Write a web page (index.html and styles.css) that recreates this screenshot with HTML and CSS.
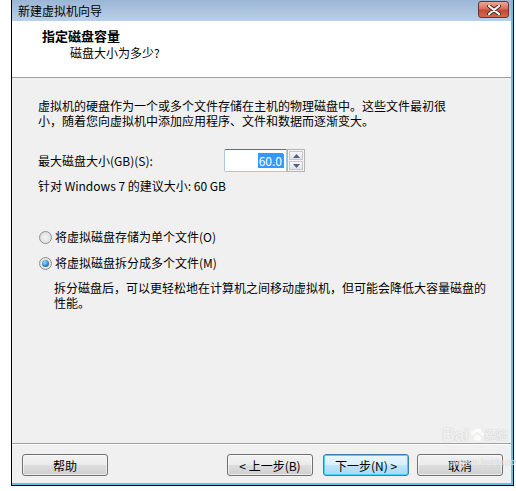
FILE: index.html
```html
<!DOCTYPE html>
<html lang="zh">
<head>
<meta charset="utf-8">
<link rel="stylesheet" href="styles.css">
</head>
<body>
<div class="window">
  <div class="frame">
    <div class="titlebar">
      <span class="title">新建虚拟机向导</span>
      <div class="close">
        <svg width="16" height="10" viewBox="0 0 16 10">
          <path d="M3 1 L13 9 M13 1 L3 9" stroke="#4a2620" stroke-width="4" stroke-linecap="round"/>
          <path d="M3 1 L13 9 M13 1 L3 9" stroke="#ffffff" stroke-width="2.2" stroke-linecap="round"/>
        </svg>
      </div>
    </div>
    <div class="header">
      <div class="h-title">指定磁盘容量</div>
      <div class="h-sub">磁盘大小为多少?</div>
    </div>
    <div class="content">
      <p class="desc">虚拟机的硬盘作为一个或多个文件存储在主机的物理磁盘中。这些文件最初很<br>小，随着您向虚拟机中添加应用程序、文件和数据而逐渐变大。</p>
      <div class="size-row">
        <span class="label">最大磁盘大小(GB)(S):</span>
        <div class="spin">
          <div class="field"><span class="sel">60.0</span><span class="caret"></span></div>
          <div class="arrows">
            <div class="arr"><svg width="7" height="4" viewBox="0 0 7 4"><path d="M0 4 L3.5 0 L7 4Z" fill="#4d6185"/></svg></div>
            <div class="arr"><svg width="7" height="4" viewBox="0 0 7 4"><path d="M0 0 L3.5 4 L7 0Z" fill="#4d6185"/></svg></div>
          </div>
        </div>
      </div>
      <div class="recommend">针对 Windows 7 的建议大小: 60 GB</div>
      <div class="radio r1"><span class="dot"></span><span>将虚拟磁盘存储为单个文件(O)</span></div>
      <div class="radio r2"><span class="dot on"></span><span>将虚拟磁盘拆分成多个文件(M)</span></div>
      <p class="desc2">拆分磁盘后，可以更轻松地在计算机之间移动虚拟机，但可能会降低大容量磁盘的<br>性能。</p>
    </div>
    <div class="footer">
      <button class="btn">帮助</button>
      <div class="spacer"></div>
      <button class="btn">&lt; 上一步(B)</button>
      <button class="btn default">下一步(N) &gt;</button>
      <button class="btn">取消</button>
    </div>
  </div>
  <div class="watermark">
    <div class="wm-top">Bai<svg class="paw" width="14" height="14" viewBox="0 0 14 14"><circle cx="3" cy="5" r="2" fill="rgba(255,255,255,0.8)"/><circle cx="6" cy="2.5" r="2" fill="rgba(255,255,255,0.8)"/><circle cx="9.5" cy="3" r="2" fill="rgba(255,255,255,0.8)"/><circle cx="12" cy="6" r="1.8" fill="rgba(255,255,255,0.8)"/><ellipse cx="7.5" cy="10" rx="3.5" ry="3" fill="rgba(255,255,255,0.8)"/></svg><span class="wm-cn">经验</span></div>
    <div class="wm-bot">jingyan.baidu.com</div>
  </div>
</div>
</body>
</html>
```
FILE: styles.css
```css
html, body {
  margin: 0;
  padding: 0;
  background: #ffffff;
}
body {
  font-family: "Noto Sans CJK SC", "Noto Sans", sans-serif;
  font-size: 12px;
  color: #000;
}
.window {
  position: relative;
  margin-left: 11px;
  width: 501px;
  height: 485px;
  border-left: 1px solid #000;
  border-right: 1px solid #000;
  border-bottom: 1px solid #000;
}
.frame {
  height: 483px;
  border-right: 2px solid #5cc2ee;
  border-bottom: 2px solid #5cc2ee;
  display: flex;
  flex-direction: column;
  background: #f0f0f0;
}
.titlebar {
  height: 21px;
  flex: none;
  background: linear-gradient(#9bb5d5, #b9d0e9);
  display: flex;
  align-items: center;
  padding-left: 6px;
  padding-right: 2px;
}
.title {
  flex: 1;
  line-height: 21px;
}
.close {
  width: 29px;
  height: 15px;
  border: 1px solid #6d3329;
  border-radius: 3px;
  background: linear-gradient(#e9a897 0%, #d7705c 45%, #c54a33 55%, #cf6a4f 100%);
  display: flex;
  align-items: center;
  justify-content: center;
  margin-top: -2px;
}
.header {
  flex: none;
  background: #ffffff;
  border-bottom: 1px solid #a0a0a0;
  box-sizing: border-box;
  height: 57px;
}
.h-title {
  font-weight: bold;
  font-size: 13px;
  line-height: 16px;
  padding-left: 30px;
  margin-top: 7px;
}
.h-sub {
  line-height: 16px;
  padding-left: 58px;
  margin-top: 1px;
}
.content {
  flex: 1;
  padding: 20px 20px 0 26px;
  border-bottom: 1px solid #a0a0a0;
}
.desc {
  margin: 0;
  line-height: 15px;
}
.size-row {
  margin-top: 21px;
  display: flex;
  align-items: center;
  height: 23px;
}
.label {
  width: 186px;
}
.spin {
  display: flex;
  height: 23px;
}
.field {
  width: 59px;
  height: 21px;
  background: #fff;
  border: 1px solid #a7c9e3;
  border-top-color: #3d7bad;
  border-radius: 2px 0 0 2px;
  display: flex;
  align-items: center;
  justify-content: flex-end;
  padding-right: 2px;
}
.sel {
  background: #3399ff;
  color: #fff;
  line-height: 15px;
  padding: 0 1px;
}
.caret {
  width: 1px;
  height: 14px;
  background: #e07020;
}
.arrows {
  width: 18px;
  display: flex;
  flex-direction: column;
  gap: 1px;
  border: 1px solid #b4b4b4;
  box-sizing: border-box;
  height: 23px;
  padding: 1px;
  background: #f4f4f4;
}
.arr {
  flex: 1;
  border: 1px solid #c7c7c7;
  background: linear-gradient(#f6f6f6, #e2e2e2);
  display: flex;
  align-items: center;
  justify-content: center;
}
.recommend {
  margin-top: 7px;
  line-height: 14px;
}
.radio {
  display: flex;
  align-items: center;
  gap: 3px;
  line-height: 14px;
  margin-left: 1px;
}
.r1 { margin-top: 37px; }
.r2 { margin-top: 12px; }
.dot {
  width: 11px;
  height: 11px;
  border-radius: 50%;
  border: 1px solid #8e8f8f;
  background: radial-gradient(circle at 50% 50%, #f4f4f4 0%, #d8d8d8 100%);
  position: relative;
}
.dot.on::after {
  content: "";
  position: absolute;
  left: 2px;
  top: 2px;
  width: 7px;
  height: 7px;
  border-radius: 50%;
  background: radial-gradient(circle at 40% 35%, #9fe0ff 0%, #2a8ad0 55%, #11528e 100%);
}
.desc2 {
  margin: 10px 0 0 16px;
  line-height: 15px;
}
.footer {
  flex: none;
  height: 39px;
  display: flex;
  align-items: flex-start;
  padding: 9px 8px 0 10px;
  box-sizing: border-box;
  border-top: 1px solid #ffffff;
}
.spacer { flex: 1; }
.btn {
  width: 86px;
  height: 22px;
  margin: 0;
  padding: 0;
  font-family: "Noto Sans CJK SC", "Noto Sans", sans-serif;
  font-size: 12px;
  color: #000;
  border: 1px solid #707070;
  border-radius: 3px;
  background: linear-gradient(#f2f2f2 0%, #ebebeb 48%, #dddddd 52%, #cfcfcf 100%);
  box-shadow: inset 0 0 0 1px rgba(255,255,255,0.6);
}
.btn + .btn { margin-left: 10px; }
.btn.default + .btn { margin-left: 8px; }
.btn.default {
  border-color: #3c7fb1;
  background: linear-gradient(#eaf6fd 0%, #d9f0fc 48%, #bee6fd 52%, #a7d9f5 100%);
  box-shadow: inset 0 0 0 1px #48d1fb;
}
.watermark {
  position: absolute;
  left: 430px;
  top: 424px;
  color: rgba(255,255,255,0.8);
  text-shadow: 0 0 1px rgba(140,140,140,0.6);
  pointer-events: none;
}
.wm-top {
  display: flex;
  align-items: center;
  font-family: "Liberation Sans", sans-serif;
  font-size: 18px;
  font-weight: bold;
  line-height: 22px;
  letter-spacing: -0.5px;
}
.paw { margin: 0 1px; }
.wm-cn {
  font-family: "Noto Sans CJK SC", sans-serif;
  font-size: 12px;
  font-weight: bold;
}
.wm-bot {
  font-family: "Liberation Sans", sans-serif;
  font-size: 9px;
  line-height: 10px;
  margin-top: 11px;
  margin-left: 8px;
  white-space: nowrap;
}
```
